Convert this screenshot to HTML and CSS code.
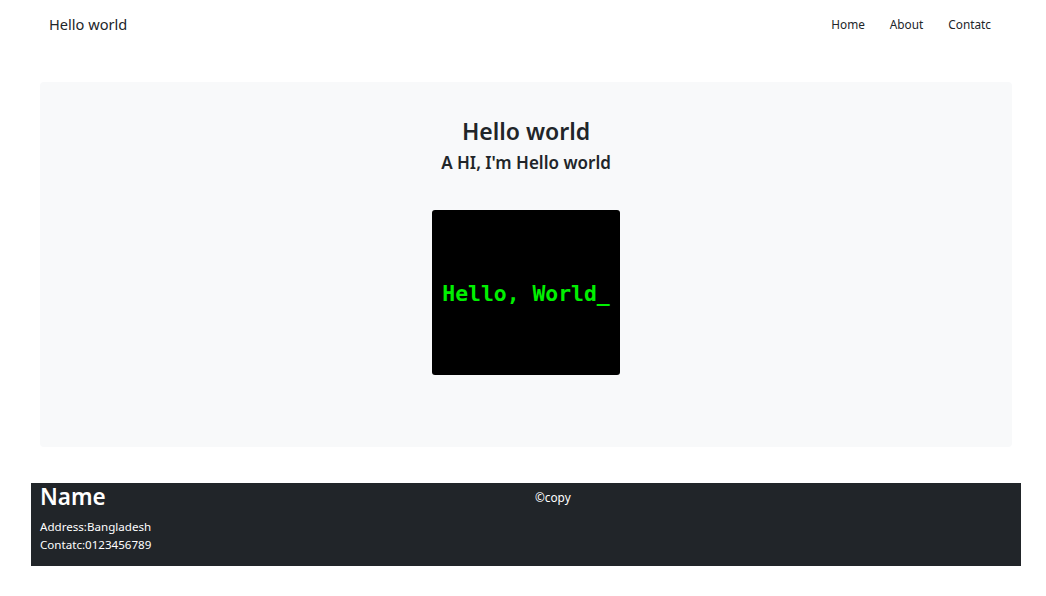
FILE: index.html
```html
<!DOCTYPE html>
<html>
<head>
<meta charset="utf-8">
<link rel="stylesheet" href="styles.css">
</head>
<body>
<nav class="navbar">
  <a class="brand" href="#">Hello world</a>
  <ul class="nav-links">
    <li><a href="#">Home</a></li>
    <li><a href="#">About</a></li>
    <li><a href="#">Contatc</a></li>
  </ul>
</nav>
<section class="hero">
  <h2 class="hero-title">Hello world</h2>
  <h3 class="hero-sub">A HI, I'm Hello world</h3>
  <div class="screen"><span class="screen-text">Hello, World_</span></div>
</section>
<footer class="footer">
  <div class="footer-col">
    <h2 class="footer-name">Name</h2>
    <p class="footer-line">Address:Bangladesh</p>
    <p class="footer-line">Contatc:0123456789</p>
  </div>
  <div class="footer-col">
    <p class="footer-copy">©copy</p>
  </div>
</footer>
</body>
</html>
```
FILE: styles.css
```css
* { box-sizing: border-box; }
body {
  margin: 0;
  font-family: "Noto Sans", "Open Sans", sans-serif;
  color: #212529;
  background: #fff;
}
a { color: inherit; text-decoration: none; }
.navbar {
  display: flex;
  justify-content: space-between;
  align-items: center;
  height: 48px;
  padding: 0 55px 0 49px;
}
.brand { font-size: 14.6px; }
.nav-links {
  display: flex;
  gap: 25px;
  list-style: none;
  margin: 0;
  padding: 0;
  font-size: 11.8px;
}
.hero {
  margin: 34px 34px 0 40px;
  background: #f8f9fa;
  border-radius: 4px;
  height: 365px;
  display: flex;
  flex-direction: column;
  align-items: center;
  padding-top: 33px;
}
.hero-title {
  margin: 0;
  font-size: 23px;
  font-weight: 600;
  line-height: 32px;
}
.hero-sub {
  margin: 0;
  font-size: 17px;
  font-weight: 600;
  line-height: 32px;
}
.screen {
  margin-top: 31px;
  width: 188px;
  height: 165px;
  background: #000;
  border-radius: 3px;
  display: flex;
  align-items: center;
  justify-content: center;
}
.screen-text {
  color: #00f000;
  font-family: "DejaVu Sans Mono", monospace;
  font-weight: bold;
  font-size: 21.4px;
  padding-top: 2px;
}
.footer {
  margin: 36px 25px 0 31px;
  background: #212529;
  color: #fff;
  height: 83px;
  display: flex;
}
.footer-col {
  flex: 1;
  padding: 0 9px;
}
.footer-name {
  margin: 0;
  font-size: 22.5px;
  font-weight: 600;
  line-height: 28px;
}
.footer-line {
  margin: 0;
  font-size: 11.6px;
  line-height: 18px;
}
.footer-name + .footer-line { margin-top: 7px; }
.footer-copy {
  margin: 6px 0 0;
  font-size: 11.8px;
}
```
